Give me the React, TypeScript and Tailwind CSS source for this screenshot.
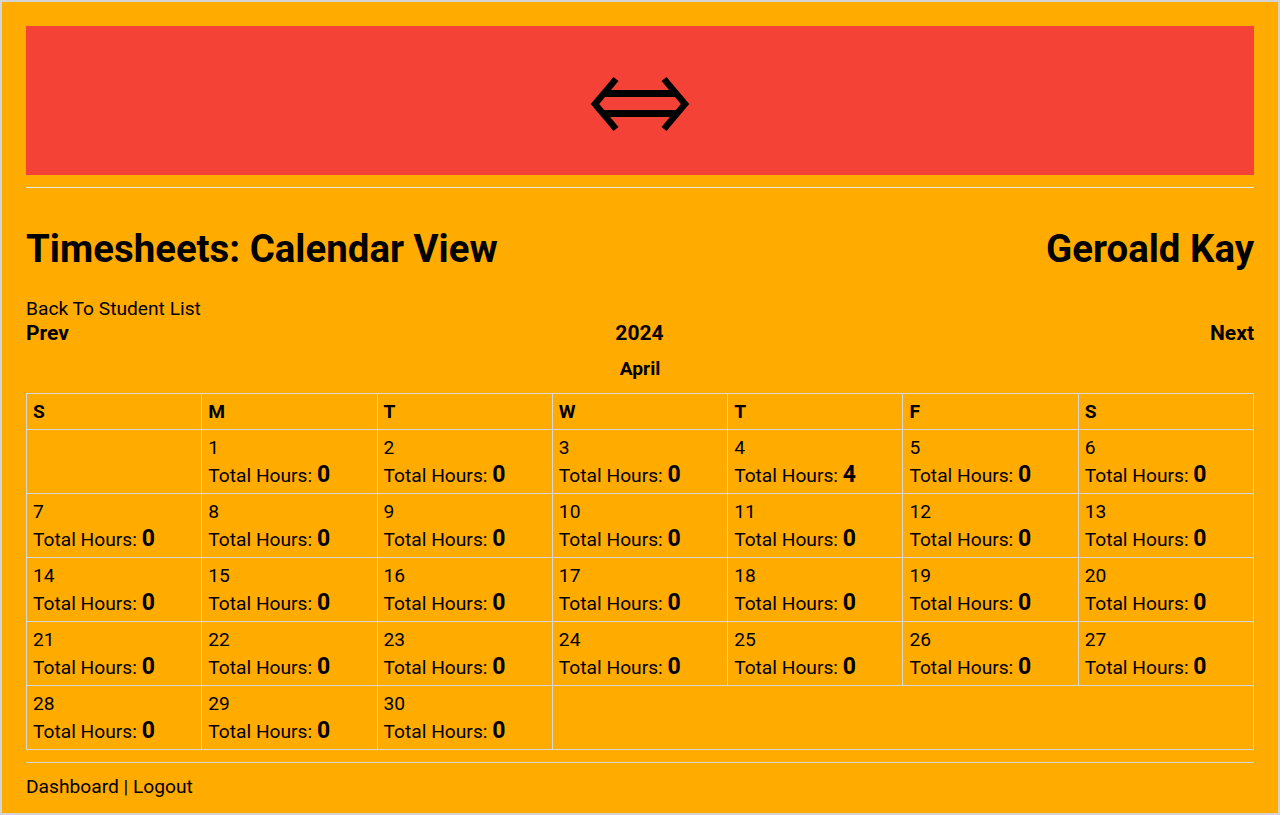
import React from "react";

const rows: (number | null)[][] = [
  [null, 1, 2, 3, 4, 5, 6],
  [7, 8, 9, 10, 11, 12, 13],
  [14, 15, 16, 17, 18, 19, 20],
  [21, 22, 23, 24, 25, 26, 27],
  [28, 29, 30],
];

const hours: Record<number, number> = { 4: 4 };

function Logo() {
  return (
    <svg width="104" height="58" viewBox="0 0 104 58" fill="none">
      <polyline points="28,4 7,29 28,54" stroke="#000" strokeWidth="6.5" strokeLinejoin="miter" strokeMiterlimit="10" />
      <polyline points="76,4 97,29 76,54" stroke="#000" strokeWidth="6.5" strokeLinejoin="miter" strokeMiterlimit="10" />
      <line x1="15" y1="18.5" x2="89" y2="18.5" stroke="#000" strokeWidth="7" />
      <line x1="15" y1="38.5" x2="89" y2="38.5" stroke="#000" strokeWidth="7" />
    </svg>
  );
}

function DayCell({ day }: { day: number }) {
  return (
    <td className="border border-[#d9d9d9] align-top px-[6px] pt-[6px] pb-[3px] h-[62px] w-[175px]">
      <div className="leading-[24px]">{day}</div>
      <div className="leading-[29px]">
        Total Hours: <span className="font-bold text-[23px]">{hours[day] ?? 0}</span>
      </div>
    </td>
  );
}

export default function App() {
  const heads = ["S", "M", "T", "W", "T", "F", "S"];
  return (
    <div
      className="w-[1280px] h-[815px] border-2 border-[#d4d4d4] bg-[#ffab00] px-6 pt-6 text-black text-[19.2px]"
      style={{ fontFamily: "Roboto, 'Liberation Sans', sans-serif" }}
    >
      <div className="h-[149px] bg-[#f44336] flex justify-center pt-[49px]">
        <Logo />
      </div>
      <hr className="mt-[12px] border-0 border-t border-[#e8e8e8]" />
      <div className="mt-[39px] flex justify-between items-center text-[38.4px] font-bold leading-[43px]">
        <h1>Timesheets: Calendar View</h1>
        <h1>Geroald Kay</h1>
      </div>
      <div className="mt-[27px] leading-[24px]">Back To Student List</div>
      <div className="flex justify-between items-center text-[21px] font-bold leading-[24px]">
        <span>Prev</span>
        <span>2024</span>
        <span>Next</span>
      </div>
      <div className="mt-[12px] text-center font-bold leading-[24px]">April</div>
      <table className="mt-[12px] w-full border-collapse table-fixed">
        <thead>
          <tr>
            {heads.map((h, i) => (
              <th key={i} className="border border-[#d9d9d9] text-left font-bold px-[6px] h-[36px] leading-[24px]">
                {h}
              </th>
            ))}
          </tr>
        </thead>
        <tbody>
          {rows.map((r, ri) => (
            <tr key={ri}>
              {r.map((d, ci) =>
                d === null ? (
                  <td key={ci} className="border border-[#d9d9d9] h-[62px]" />
                ) : (
                  <DayCell key={ci} day={d} />
                )
              )}
              {r.length < 7 && <td colSpan={7 - r.length} className="border border-[#d9d9d9]" />}
            </tr>
          ))}
        </tbody>
      </table>
      <hr className="mt-[12px] border-0 border-t border-[#d9d9d9]" />
      <div className="mt-[12px] leading-[24px]">
        Dashboard | Logout
      </div>
    </div>
  );
}
